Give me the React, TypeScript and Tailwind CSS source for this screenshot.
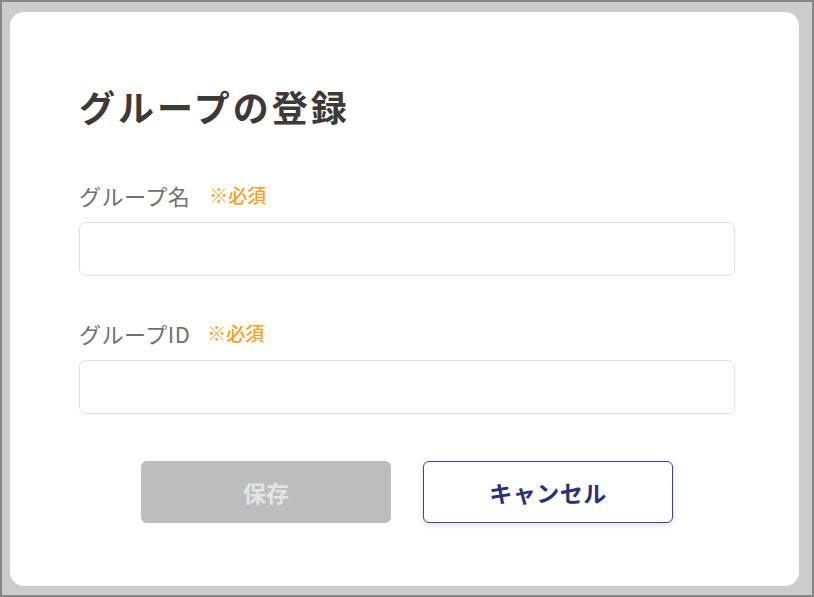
export default function App() {
  const font = { fontFamily: '"Noto Sans CJK JP", "Noto Sans", sans-serif' };
  return (
    <div
      className="w-[814px] h-[597px] border-2 border-[#888888] bg-[#cccccc] pl-[8px] pt-[10px] pr-[13px] pb-[9px]"
      style={font}
    >
      <div className="h-full bg-white rounded-[14px] pt-[74px] pl-[69px] pr-[64px]">
        <h1 className="text-[36px] leading-[40px] tracking-[3px] font-bold text-[#3c3a36]">グループの登録</h1>

        <div className="mt-[55px] flex items-center h-[28px]">
          <span className="text-[22px] tracking-[0.5px] text-[#707070]">グループ名</span>
          <span className="ml-[19px] text-[19px] font-medium text-[#f5a11c]">※必須</span>
        </div>
        <input className="mt-[13px] block w-full h-[54px] border-[1.5px] border-[#dfdfdf] rounded-[7px] outline-none px-3" />

        <div className="mt-[43px] flex items-center h-[28px]">
          <span className="text-[22px] tracking-[0.5px] text-[#707070]">グループID</span>
          <span className="ml-[17px] text-[19px] font-medium text-[#f5a11c]">※必須</span>
        </div>
        <input className="mt-[13px] block w-full h-[54px] border-[1.5px] border-[#dfdfdf] rounded-[7px] outline-none px-3" />

        <div className="mt-[47px] flex justify-center gap-[32px]">
          <button
            disabled
            className="w-[250px] h-[62px] rounded-[6px] bg-[#bdbdbd] text-[23px] font-bold text-[#e4e4e4]"
          >
            保存
          </button>
          <button className="w-[250px] h-[62px] rounded-[6px] bg-white border-[1.5px] border-[#3a4493] text-[23px] tracking-[0.5px] font-bold text-[#27307a] shadow-[0_2px_6px_rgba(0,0,0,0.12)]">
            キャンセル
          </button>
        </div>
      </div>
    </div>
  );
}
